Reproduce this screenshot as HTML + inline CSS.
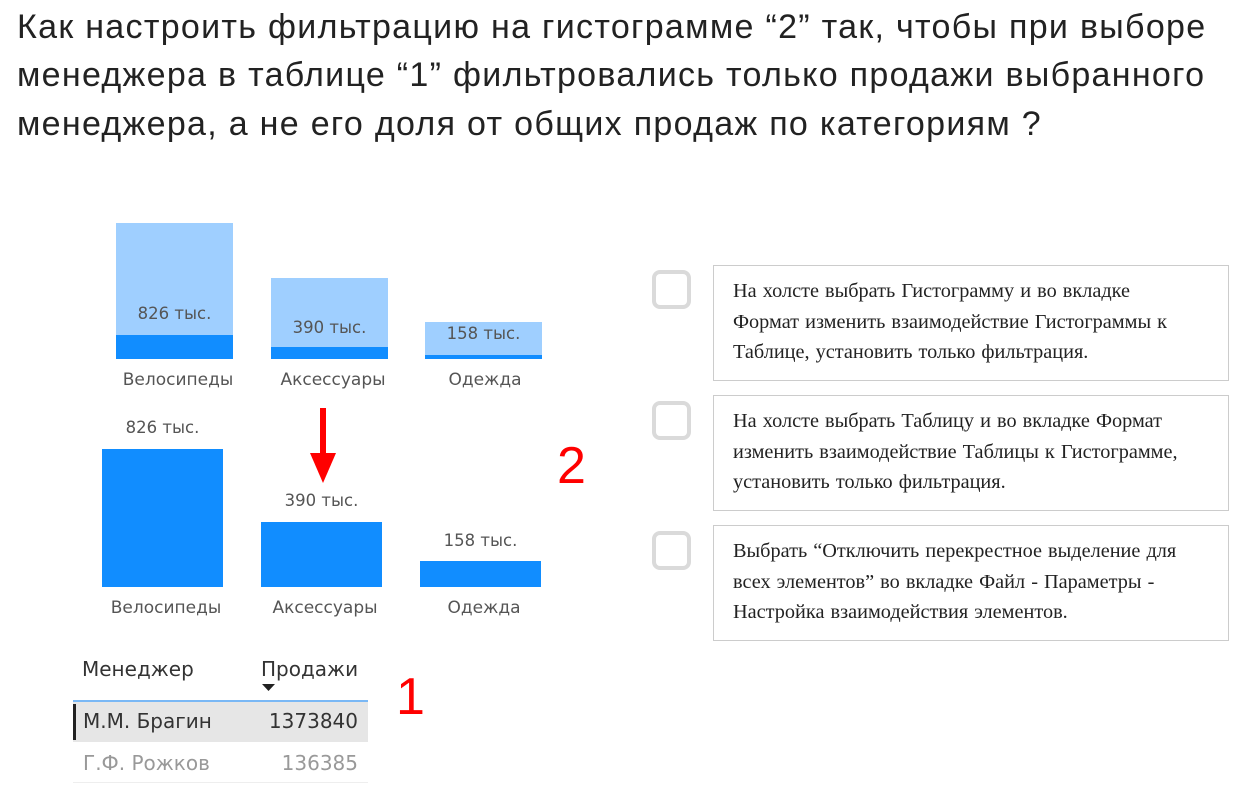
<!DOCTYPE html>
<html><head><meta charset="utf-8"><style>
body{margin:0;width:1252px;height:802px;background:#fff;position:relative;overflow:hidden;font-family:"Liberation Sans",sans-serif}
.a{position:absolute}
.t{position:absolute;left:17px;font-size:34px;letter-spacing:1.3px;color:#222;white-space:nowrap;line-height:49px}
.lb{position:absolute;font-family:"DejaVu Sans",sans-serif;font-size:16.5px;color:#555;white-space:nowrap;text-align:center}
.lc{font-size:17px}
.cb{position:absolute;left:652px;width:31px;height:31px;border:4px solid #dadada;border-radius:8px}
.bx{position:absolute;left:713px;width:495px;border:1px solid #ccc;padding:10px 0 0 19px;font-family:"Liberation Serif",serif;font-size:20.3px;line-height:30.5px;color:#222;height:104px;white-space:nowrap;word-spacing:1px}
</style></head><body>
<div class="t" style="top:3px">Как настроить фильтрацию на гистограмме “2” так, чтобы при выборе</div>
<div class="t" style="top:51px">менеджера в таблице “1” фильтровались только продажи выбранного</div>
<div class="t" style="top:100px">менеджера, а не его доля от общих продаж по категориям ?</div>

<div class="a" style="left:116px;top:223px;width:117px;height:136px;background:#9fcfff"></div>
<div class="a" style="left:116px;top:335px;width:117px;height:24px;background:#118dff"></div>
<div class="a" style="left:271px;top:278px;width:117px;height:81px;background:#9fcfff"></div>
<div class="a" style="left:271px;top:347px;width:117px;height:12px;background:#118dff"></div>
<div class="a" style="left:425px;top:322px;width:117px;height:37px;background:#9fcfff"></div>
<div class="a" style="left:425px;top:355px;width:117px;height:4px;background:#118dff"></div>
<div class="lb" style="left:116px;width:117px;top:304px">826 тыс.</div>
<div class="lb" style="left:271px;width:117px;top:318px">390 тыс.</div>
<div class="lb" style="left:425px;width:117px;top:324px">158 тыс.</div>
<div class="lb lc" style="left:116px;width:124px;top:370px">Велосипеды</div>
<div class="lb lc" style="left:271px;width:124px;top:370px">Аксессуары</div>
<div class="lb lc" style="left:425px;width:120px;top:370px">Одежда</div>

<div class="a" style="left:102px;top:449px;width:121px;height:138px;background:#118dff"></div>
<div class="a" style="left:261px;top:522px;width:121px;height:65px;background:#118dff"></div>
<div class="a" style="left:420px;top:561px;width:121px;height:26px;background:#118dff"></div>
<div class="lb" style="left:102px;width:121px;top:418px">826 тыс.</div>
<div class="lb" style="left:261px;width:121px;top:491px">390 тыс.</div>
<div class="lb" style="left:420px;width:121px;top:531px">158 тыс.</div>
<div class="lb lc" style="left:102px;width:128px;top:598px">Велосипеды</div>
<div class="lb lc" style="left:261px;width:128px;top:598px">Аксессуары</div>
<div class="lb lc" style="left:420px;width:128px;top:598px">Одежда</div>

<svg class="a" style="left:300px;top:405px" width="46" height="80"><rect x="20" y="3" width="6" height="48" fill="#f00"/><path d="M10 48 L36 48 L23 78 Z" fill="#f00"/></svg>
<div class="a" style="left:557px;top:436px;font-size:52px;color:#f00">2</div>

<div class="lb" style="left:82px;top:657px;font-size:20px;color:#333;text-align:left">Менеджер</div>
<div class="lb" style="left:261px;top:657px;font-size:20px;color:#333;text-align:left">Продажи</div>
<svg class="a" style="left:262px;top:684px" width="14" height="8"><path d="M0 0 L13 0 L6.5 7 Z" fill="#222"/></svg>
<div class="a" style="left:73px;top:700px;width:295px;height:2px;background:#7ab8f5"></div>
<div class="a" style="left:73px;top:702px;width:295px;height:40px;background:#e6e6e6"></div>
<div class="a" style="left:73px;top:704px;width:3px;height:36px;background:#222"></div>
<div class="lb" style="left:83px;top:709px;font-size:20px;color:#333;text-align:left">М.М. Брагин</div>
<div class="lb" style="left:260px;width:98px;top:709px;font-size:20px;color:#333;text-align:right">1373840</div>
<div class="lb" style="left:83px;top:751px;font-size:20px;color:#999;text-align:left">Г.Ф. Рожков</div>
<div class="lb" style="left:260px;width:98px;top:751px;font-size:20px;color:#999;text-align:right">136385</div>
<div class="a" style="left:73px;top:782px;width:295px;height:1px;background:#eee"></div>
<div class="a" style="left:396px;top:667px;font-size:52px;color:#f00">1</div>

<div class="cb" style="top:270px"></div>
<div class="cb" style="top:401px"></div>
<div class="cb" style="top:531px"></div>
<div class="bx" style="top:265px">На холсте выбрать Гистограмму и во вкладке<br>Формат изменить взаимодействие Гистограммы к<br>Таблице, установить только фильтрация.</div>
<div class="bx" style="top:395px">На холсте выбрать Таблицу и во вкладке Формат<br>изменить взаимодействие Таблицы к Гистограмме,<br>установить только фильтрация.</div>
<div class="bx" style="top:525px">Выбрать “Отключить перекрестное выделение для<br>всех элементов” во вкладке Файл - Параметры -<br>Настройка взаимодействия элементов.</div>
</body></html>
